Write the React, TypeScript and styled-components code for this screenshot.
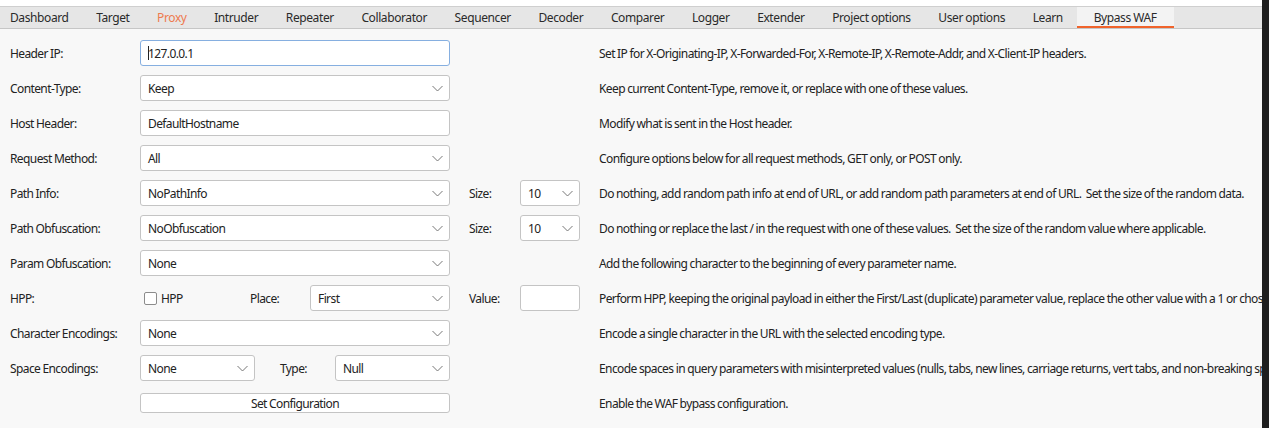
import React from "react";
import styled, { createGlobalStyle } from "styled-components";

const GlobalStyle = createGlobalStyle`
  html, body {
    margin: 0;
    padding: 0;
    background: #f8f8f8;
    overflow: hidden;
  }
  body {
    font-family: "Noto Sans", "DejaVu Sans", sans-serif;
    font-size: 12px;
    letter-spacing: -0.6px;
    word-spacing: -0.3px;
    color: #222;
  }
`;

const tabs = [
  "Dashboard", "Target", "Proxy", "Intruder", "Repeater", "Collaborator",
  "Sequencer", "Decoder", "Comparer", "Logger", "Extender",
  "Project options", "User options", "Learn", "Bypass WAF",
];

const Window = styled.div`
  display: flex;
  width: 1269px;
  height: 428px;
  overflow: hidden;
`;

const Main = styled.div`
  flex: 1;
  display: flex;
  flex-direction: column;
  min-width: 0;
  overflow: hidden;
  background: #f8f8f8;
`;

const EdgeBar = styled.div`
  width: 7px;
  background: #1f1f1f;
`;

const TopStrip = styled.div`
  height: 6px;
  background: #fff;
`;

const TabBar = styled.div`
  display: flex;
  height: 21px;
  background: #e6e6e6;
  border-top: 1px solid #cfcfcf;
  border-bottom: 1px solid #c6c6c6;
`;

const Tab = styled.div<{ $active?: boolean; $highlight?: boolean }>`
  display: flex;
  align-items: center;
  justify-content: center;
  padding: 0 ${(p) => (p.$active ? 17 : 13.8)}px;
  white-space: nowrap;
  font-size: 12px;
  letter-spacing: -0.4px;
  word-spacing: -0.3px;
  color: ${(p) => (p.$highlight ? "#ee7a4e" : "#2a2a2a")};
  background: ${(p) => (p.$active ? "#f3f3f3" : "transparent")};
  box-shadow: ${(p) => (p.$active ? "inset 0 -2px 0 #f0632b" : "none")};

  &:first-child {
    padding-left: 10px;
  }
`;

const Form = styled.div`
  display: grid;
  grid-template-columns: 130px 310px 70px 60px 1fr;
  grid-auto-rows: 26px;
  row-gap: 9px;
  align-items: center;
  padding: 11px 0 0 10px;
`;

const Label = styled.div`
  grid-column: 1;
  white-space: nowrap;
`;

const SubLabel = styled.div`
  padding-left: 19px;
  white-space: nowrap;
`;

const Desc = styled.div`
  grid-column: 5;
  padding-left: 19px;
  white-space: pre;
  overflow: hidden;
`;

const Field = styled.div<{ $focused?: boolean }>`
  height: 26px;
  box-sizing: border-box;
  display: flex;
  align-items: center;
  padding: 0 7px;
  background: #fff;
  border: 1px solid ${(p) => (p.$focused ? "#86afe0" : "#c4c4c4")};
  border-radius: 3px;
  white-space: nowrap;
`;

const Caret = styled.span`
  display: inline-block;
  width: 1px;
  height: 14px;
  background: #222;
  margin-right: -1px;
`;

const ComboBox = styled.div<{ $width?: number }>`
  height: 26px;
  box-sizing: border-box;
  display: flex;
  align-items: center;
  justify-content: space-between;
  padding: 0 6px 0 7px;
  background: #fff;
  border: 1px solid #c4c4c4;
  border-radius: 3px;
  white-space: nowrap;
  ${(p) => (p.$width ? `width: ${p.$width}px; flex: none;` : "")}
`;

const Inline = styled.div`
  display: flex;
  align-items: center;
`;

const CheckWrap = styled.label`
  display: flex;
  align-items: center;
  gap: 4px;
  width: 110px;
  padding-left: 4px;
  box-sizing: border-box;
`;

const CheckBox = styled.span`
  width: 13px;
  height: 13px;
  box-sizing: border-box;
  border: 1px solid #8c8c8c;
  border-radius: 2px;
  background: #fff;
`;

const InlineLabel = styled.div<{ $width: number; $indent?: number }>`
  width: ${(p) => p.$width}px;
  padding-left: ${(p) => p.$indent ?? 0}px;
  box-sizing: border-box;
  flex: none;
`;

const Button = styled.div`
  height: 20px;
  box-sizing: border-box;
  display: flex;
  align-items: center;
  justify-content: center;
  background: #fff;
  border: 1px solid #c4c4c4;
  border-radius: 3px;
`;

const Chevron = () => (
  <svg width="11" height="7" viewBox="0 0 11 7" fill="none">
    <path d="M0.5 1 L5.5 6 L10.5 1" stroke="#777" strokeWidth="1" />
  </svg>
);

const Combo: React.FC<{ value: string; width?: number }> = ({ value, width }) => (
  <ComboBox $width={width}>
    <span>{value}</span>
    <Chevron />
  </ComboBox>
);

export default function App() {
  return (
    <>
      <GlobalStyle />
      <Window>
        <Main>
          <TopStrip />
          <TabBar>
            {tabs.map((t) => (
              <Tab key={t} $active={t === "Bypass WAF"} $highlight={t === "Proxy"}>
                {t}
              </Tab>
            ))}
          </TabBar>
          <Form>
            <Label>Header IP:</Label>
            <Field $focused>
              <Caret />
              127.0.0.1
            </Field>
            <Desc>Set IP for X-Originating-IP, X-Forwarded-For, X-Remote-IP, X-Remote-Addr, and X-Client-IP headers.</Desc>

            <Label>Content-Type:</Label>
            <Combo value="Keep" />
            <Desc>Keep current Content-Type, remove it, or replace with one of these values.</Desc>

            <Label>Host Header:</Label>
            <Field>DefaultHostname</Field>
            <Desc>Modify what is sent in the Host header.</Desc>

            <Label>Request Method:</Label>
            <Combo value="All" />
            <Desc>Configure options below for all request methods, GET only, or POST only.</Desc>

            <Label>Path Info:</Label>
            <Combo value="NoPathInfo" />
            <SubLabel>Size:</SubLabel>
            <Combo value="10" />
            <Desc>Do nothing, add random path info at end of URL, or add random path parameters at end of URL.  Set the size of the random data.</Desc>

            <Label>Path Obfuscation:</Label>
            <Combo value="NoObfuscation" />
            <SubLabel>Size:</SubLabel>
            <Combo value="10" />
            <Desc>Do nothing or replace the last / in the request with one of these values.  Set the size of the random value where applicable.</Desc>

            <Label>Param Obfuscation:</Label>
            <Combo value="None" />
            <Desc>Add the following character to the beginning of every parameter name.</Desc>

            <Label>HPP:</Label>
            <Inline>
              <CheckWrap>
                <CheckBox />
                HPP
              </CheckWrap>
              <InlineLabel $width={60}>Place:</InlineLabel>
              <Combo value="First" width={140} />
            </Inline>
            <SubLabel>Value:</SubLabel>
            <Field />
            <Desc>Perform HPP, keeping the original payload in either the First/Last (duplicate) parameter value, replace the other value with a 1 or chosen value.</Desc>

            <Label>Character Encodings:</Label>
            <Combo value="None" />
            <Desc>Encode a single character in the URL with the selected encoding type.</Desc>

            <Label>Space Encodings:</Label>
            <Inline>
              <Combo value="None" width={115} />
              <InlineLabel $width={80} $indent={25}>Type:</InlineLabel>
              <Combo value="Null" width={115} />
            </Inline>
            <Desc>Encode spaces in query parameters with misinterpreted values (nulls, tabs, new lines, carriage returns, vert tabs, and non-breaking spaces).</Desc>

            <Label />
            <Button>Set Configuration</Button>
            <Desc>Enable the WAF bypass configuration.</Desc>
          </Form>
        </Main>
        <EdgeBar />
      </Window>
    </>
  );
}
